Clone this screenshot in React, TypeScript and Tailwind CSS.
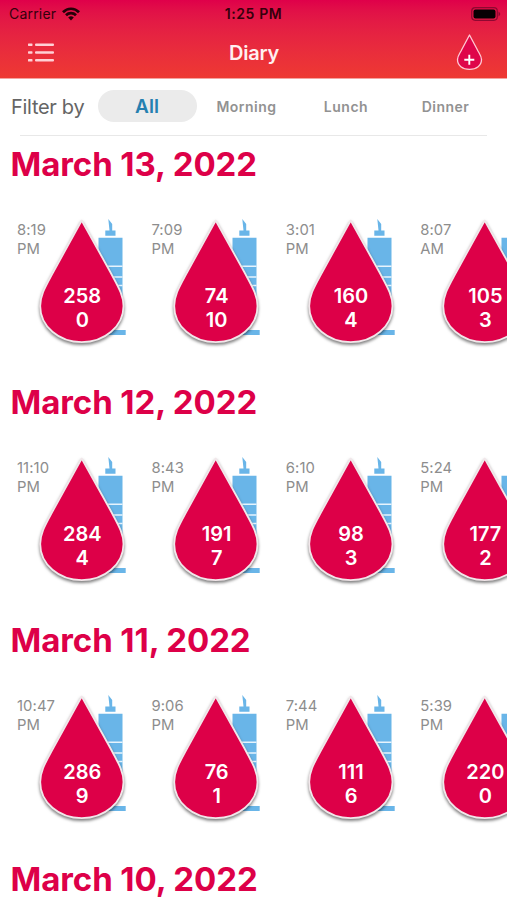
type Entry = { time: string; period: string; glucose: string; dose: string };
type Day = { date: string; entries: Entry[] };

const e = (time: string, period: string, glucose: string, dose: string): Entry => ({ time, period, glucose, dose });

const days: Day[] = [
  { date: 'March 13, 2022', entries: [e('8:19', 'PM', '258', '0'), e('7:09', 'PM', '74', '10'), e('3:01', 'PM', '160', '4'), e('8:07', 'AM', '105', '3')] },
  { date: 'March 12, 2022', entries: [e('11:10', 'PM', '284', '4'), e('8:43', 'PM', '191', '7'), e('6:10', 'PM', '98', '3'), e('5:24', 'PM', '177', '2')] },
  { date: 'March 11, 2022', entries: [e('10:47', 'PM', '286', '9'), e('9:06', 'PM', '76', '1'), e('7:44', 'PM', '111', '6'), e('5:39', 'PM', '220', '0')] },
  { date: 'March 10, 2022', entries: [] },
];

function StatusBar() {
  return (
    <div className="flex h-[27px] items-center justify-between pl-[9px] pr-[6px] text-[14px] text-[#35000c]">
      <div className="flex w-[120px] items-center gap-[6px]">
        <span className="tracking-[0.2px]">Carrier</span>
        <svg width="18" height="14" viewBox="0 0 18 14" fill="none" stroke="#250008" strokeWidth="2.7">
          <path d="M1 5.2C5.5 .6 12.5 .6 17 5.2" />
          <path d="M4 8.3C6.8 5.5 11.2 5.5 14 8.3" />
          <path d="M6.2 10.5Q9 8 11.8 10.5L9 13.5Z" fill="#250008" stroke="none" />
        </svg>
      </div>
      <span className="-ml-[3px] text-[14px] font-semibold tracking-[0.6px]">1:25 PM</span>
      <div className="flex w-[120px] justify-end">
        <svg width="30" height="14" viewBox="0 0 30 14">
          <rect x=".7" y=".7" width="25.6" height="12.6" rx="3.5" fill="none" stroke="#8f0831" strokeWidth="1.2" />
          <rect x="2.5" y="2.5" width="22" height="9" rx="2" fill="#080003" />
          <path d="M27.5 4.5Q31 7 27.5 9.5Z" fill="#8f0831" />
        </svg>
      </div>
    </div>
  );
}

function NavBar() {
  return (
    <div className="flex h-[51px] items-center justify-between pl-[27px] pr-[24px]">
      <svg width="28" height="20" viewBox="0 0 28 20" fill="#ffd0d5">
        <rect x="1" y=".5" width="4.5" height="2.4" rx=".6" />
        <rect x="8" y=".5" width="19" height="2.4" rx="1" />
        <rect x="1" y="8.3" width="4.5" height="2.4" rx=".6" />
        <rect x="8" y="8.3" width="19" height="2.4" rx="1" />
        <rect x="1" y="16.1" width="4.5" height="2.4" rx=".6" />
        <rect x="8" y="16.1" width="19" height="2.4" rx="1" />
      </svg>
      <h1 className="-ml-[3px] text-[20px] font-semibold tracking-[-0.2px] text-[#fff0f0]">Diary</h1>
      <svg width="27" height="38" viewBox="0 0 27 38">
        <path d="M13.5 1L5 17C3 20.5 1.500 22.500 1.500 25.500C1.500 31.500 6.500 35.300 13.500 35.300S25.500 31.500 25.500 25.500C25.500 22.500 24 20.500 22 17Z" fill="#df064a" stroke="#ffc9d4" strokeWidth="1.3" strokeLinejoin="round" />
        <path d="M8.3 25.700H18.300M13.300 20.700V30.700" stroke="#fff" strokeWidth="1.900" />
      </svg>
    </div>
  );
}

function FilterBar() {
  return (
    <div className="flex h-[57px] items-center pb-[3px] pl-[11px]">
      <span className="w-[86.5px] whitespace-nowrap pt-px text-[20px] tracking-[-0.3px] text-[#656565]">Filter by</span>
      <span className="flex h-8 w-[99px] items-center justify-center rounded-full bg-[#ebebeb] pt-[2px] text-[19px] font-semibold text-[#2580b0]">All</span>
      <span className="w-[100px] text-center text-[14px] font-semibold tracking-[0.5px] text-[#929292]">Morning</span>
      <span className="w-[99px] text-center text-[14px] font-semibold tracking-[0.5px] text-[#929292]">Lunch</span>
      <span className="w-[100px] text-center text-[14px] font-semibold tracking-[0.5px] text-[#929292]">Dinner</span>
    </div>
  );
}

function EntryItem({ time, period, glucose, dose }: Entry) {
  return (
    <div className="grid h-[140px] w-[134.4px] shrink-0">
      <svg className="col-start-1 row-start-1 overflow-visible" width="134" height="140" viewBox="0 0 134 140">
        <g fill="#69b5e8">
          <path d="M91.3 7L95.2 12V18.5H98.5V23.8H88.3V18.5H92.5Z" />
          <path d="M81.5 25.8H105.5V90H81.5Z" />
          <path d="M96 118H108.7V123H90V118Z" />
        </g>
        <path d="M91 54.3H105.5M95 65H105.5M100 73.5H105.5" stroke="#e7f4fd" strokeWidth="1.5" />
        <path
          className="drop-shadow-[0_2px_1.5px_rgba(0,0,0,0.5)]"
          d="M64.7 8.5L36.3 60C28.5 74.5 23.2 83 23.2 94C23.2 114.5 42 130.2 64.7 130.2S106.5 114.5 106.5 94C106.5 83 101 74.5 93.3 60Z"
          fill="#dd0048"
          stroke="#f1e7ea"
          strokeWidth="1.8"
          strokeLinejoin="round"
        />
      </svg>
      <div className="z-10 col-start-1 row-start-1 flex flex-col">
        <div className="h-[71px] pt-[8.5px] text-[14.8px] leading-[19.5px] tracking-[0.1px] text-[#8d8d8d]">
          <div>{time}</div>
          <div>{period}</div>
        </div>
        <div className="w-[130.5px] pt-[1px] text-center text-[20px] font-semibold leading-[24px] text-white">
          <div>{glucose}</div>
          <div>{dose}</div>
        </div>
      </div>
    </div>
  );
}

function DaySection({ date, entries }: Day) {
  return (
    <section className="h-[238.2px]">
      <h2 className="whitespace-nowrap pl-[10.5px] text-[33px] font-bold leading-[56px] tracking-[-0.08px] text-[#dd0048]">{date}</h2>
      <div className="flex overflow-hidden pl-[17px] pt-[20px]">
        {entries.map((entry) => (
          <EntryItem key={entry.time} {...entry} />
        ))}
      </div>
    </section>
  );
}

export default function App() {
  return (
    <main className="h-[900px] w-[507px] overflow-hidden bg-white font-['Inter',sans-serif]">
      <header className="h-[79px] border-b border-[#f4a49f] bg-linear-to-b from-[#df004a] to-[#ee3932]">
        <StatusBar />
        <NavBar />
      </header>
      <FilterBar />
      <div className="mx-5 -mt-px h-px bg-[#e8e8e8]" />
      {days.map((day) => (
        <DaySection key={day.date} {...day} />
      ))}
    </main>
  );
}
